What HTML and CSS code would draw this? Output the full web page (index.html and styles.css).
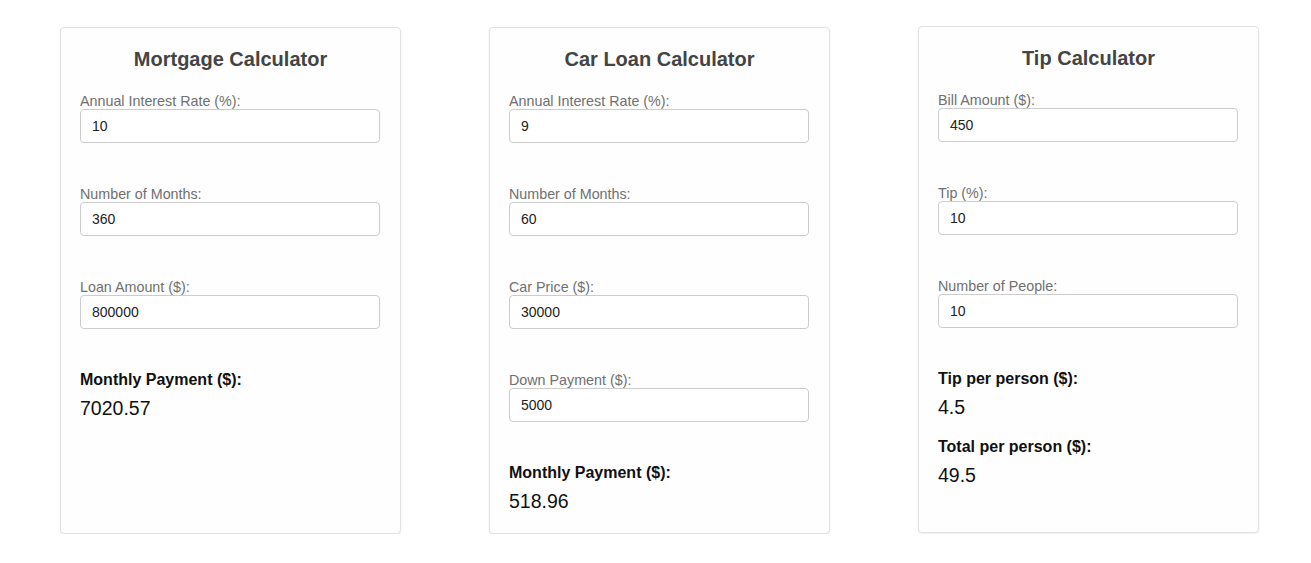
FILE: index.html
```html
<!DOCTYPE html>
<html>
<head>
<meta charset="utf-8">
<link rel="stylesheet" href="styles.css">
</head>
<body>
<div class="row">
  <section class="card">
    <h2 class="title">Mortgage Calculator</h2>
    <div class="group">
      <label class="label">Annual Interest Rate (%):</label>
      <input class="input" type="text" value="10">
    </div>
    <div class="group">
      <label class="label">Number of Months:</label>
      <input class="input" type="text" value="360">
    </div>
    <div class="group">
      <label class="label">Loan Amount ($):</label>
      <input class="input" type="text" value="800000">
    </div>
    <div class="result">
      <div class="result-label">Monthly Payment ($):</div>
      <div class="result-value">7020.57</div>
    </div>
  </section>

  <section class="card">
    <h2 class="title">Car Loan Calculator</h2>
    <div class="group">
      <label class="label">Annual Interest Rate (%):</label>
      <input class="input" type="text" value="9">
    </div>
    <div class="group">
      <label class="label">Number of Months:</label>
      <input class="input" type="text" value="60">
    </div>
    <div class="group">
      <label class="label">Car Price ($):</label>
      <input class="input" type="text" value="30000">
    </div>
    <div class="group">
      <label class="label">Down Payment ($):</label>
      <input class="input" type="text" value="5000">
    </div>
    <div class="result">
      <div class="result-label">Monthly Payment ($):</div>
      <div class="result-value">518.96</div>
    </div>
  </section>

  <section class="card card-up">
    <h2 class="title">Tip Calculator</h2>
    <div class="group">
      <label class="label">Bill Amount ($):</label>
      <input class="input" type="text" value="450">
    </div>
    <div class="group">
      <label class="label">Tip (%):</label>
      <input class="input" type="text" value="10">
    </div>
    <div class="group">
      <label class="label">Number of People:</label>
      <input class="input" type="text" value="10">
    </div>
    <div class="result">
      <div class="result-label">Tip per person ($):</div>
      <div class="result-value">4.5</div>
    </div>
    <div class="result result-next">
      <div class="result-label">Total per person ($):</div>
      <div class="result-value">49.5</div>
    </div>
  </section>
</div>
</body>
</html>
```

FILE: styles.css
```css
html, body {
  margin: 0;
  padding: 0;
  background: #ffffff;
  font-family: "Liberation Sans", Arial, sans-serif;
}

.row {
  display: flex;
  align-items: flex-start;
  gap: 88px;
  padding: 27px 0 0 60px;
}

.card {
  box-sizing: border-box;
  width: 341px;
  height: 507px;
  padding: 20px 19px;
  background: #fefefe;
  border: 1px solid #e2e2e2;
  border-radius: 4px;
  box-shadow: 0 1px 2px rgba(0, 0, 0, 0.08);
}

.card-up {
  margin-top: -1px;
}

.title {
  margin: 0 0 23px 0;
  font-size: 20px;
  line-height: 22px;
  font-weight: bold;
  color: #444444;
  text-align: center;
}

.group {
  margin-bottom: 43px;
}

.label {
  display: block;
  font-size: 14.3px;
  line-height: 16px;
  color: #707070;
}

.input {
  display: block;
  box-sizing: border-box;
  width: 300px;
  height: 34px;
  margin: 0;
  padding: 0 11px;
  border: 1px solid #cccccc;
  border-radius: 4px;
  background: #ffffff;
  font-family: "Liberation Sans", Arial, sans-serif;
  font-size: 14px;
  color: #222222;
  outline: none;
}

.result {
  margin-top: -1px;
}

.result-next {
  margin-top: 21px;
}

.result-label {
  font-size: 16px;
  line-height: 18px;
  font-weight: bold;
  color: #111111;
}

.result-value {
  margin-top: 9px;
  font-size: 19.5px;
  line-height: 20px;
  color: #111111;
}
```
